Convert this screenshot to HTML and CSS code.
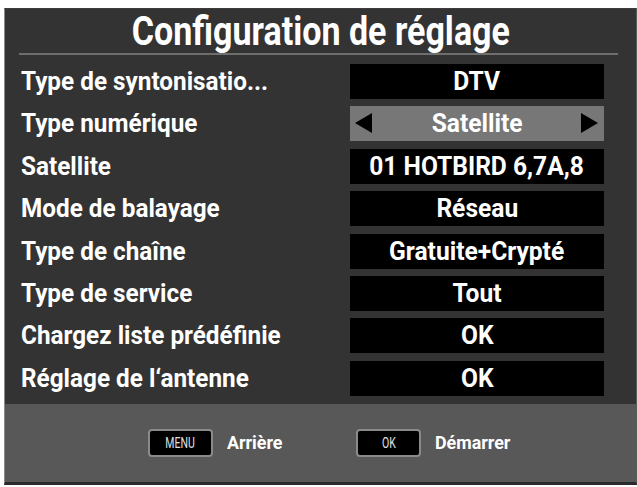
FILE: index.html
```
<!DOCTYPE html>
<html>
<head>
<meta charset="utf-8">
<link rel="stylesheet" href="styles.css">
</head>
<body>
<div class="panel">
  <div class="header">
    <h1 class="title"><span class="cond">Configuration de réglage</span></h1>
    <div class="sep"></div>
  </div>
  <div class="rows">
    <div class="label"><span class="cond">Type de syntonisatio...</span></div>
    <div class="value"><span class="cond">DTV</span></div>
    <div class="label"><span class="cond">Type numérique</span></div>
    <div class="value sel"><span class="arrow left"></span><span class="cond">Satellite</span><span class="arrow right"></span></div>
    <div class="label"><span class="cond">Satellite</span></div>
    <div class="value"><span class="cond">01 HOTBIRD 6,7A,8</span></div>
    <div class="label"><span class="cond">Mode de balayage</span></div>
    <div class="value"><span class="cond">Réseau</span></div>
    <div class="label"><span class="cond">Type de chaîne</span></div>
    <div class="value"><span class="cond">Gratuite+Crypté</span></div>
    <div class="label"><span class="cond">Type de service</span></div>
    <div class="value"><span class="cond">Tout</span></div>
    <div class="label"><span class="cond">Chargez liste prédéfinie</span></div>
    <div class="value"><span class="cond">OK</span></div>
    <div class="label"><span class="cond">Réglage de l‘antenne</span></div>
    <div class="value"><span class="cond">OK</span></div>
  </div>
  <div class="footer">
    <div class="hint"><span class="key"><span class="keytext">MENU</span></span><span class="hint-text">Arrière</span></div>
    <div class="hint"><span class="key"><span class="keytext">OK</span></span><span class="hint-text">Démarrer</span></div>
  </div>
</div>
</body>
</html>
```
FILE: styles.css
```
html, body {
  margin: 0;
  padding: 0;
  background: #ffffff;
}
body {
  font-family: "Roboto", "Liberation Sans", sans-serif;
  font-weight: bold;
  color: #ffffff;
  overflow: hidden;
}
.cond {
  display: inline-block;
  white-space: nowrap;
}
.panel {
  margin: 8px 0 0 4px;
  height: 473px;
  background: #333333;
  border-left: 1px solid #8c8c8c;
  border-right: 1px solid #5a5a5a;
  border-top: 1px solid #3c3c3c;
  border-bottom: 3px solid #2a2a2a;
  display: flex;
  flex-direction: column;
}
.header {
  display: flex;
  flex-direction: column;
}
.title {
  margin: 0;
  font-size: 41px;
  line-height: 44px;
  text-align: center;
  font-weight: bold;
}
.title .cond {
  transform: scaleX(0.83);
  transform-origin: center;
}
.sep {
  height: 2px;
  background: #6e6e6e;
  margin: 0 18px 0 14px;
}
.rows {
  margin-top: 9px;
  display: grid;
  grid-template-columns: 331px 254px;
  grid-auto-rows: 35px;
  row-gap: 7.4px;
  padding-left: 14px;
}
.label {
  font-size: 26px;
  line-height: 35px;
  white-space: nowrap;
  padding-left: 2px;
}
.label .cond {
  transform: scaleX(0.935);
  transform-origin: left center;
}
.value {
  background: #000000;
  font-size: 26px;
  line-height: 35px;
  text-align: center;
  position: relative;
}
.value .cond {
  transform: scaleX(0.945);
  transform-origin: center;
}
.value.sel {
  background: #777777;
}
.arrow {
  position: absolute;
  top: 7px;
  width: 0;
  height: 0;
  border-top: 10px solid transparent;
  border-bottom: 10px solid transparent;
}
.arrow.left {
  left: 5px;
  border-right: 17px solid #000;
}
.arrow.right {
  right: 6px;
  border-left: 17px solid #000;
}
.footer {
  margin-top: 8px;
  flex: 1;
  background: #585858;
  display: flex;
  align-items: center;
  padding-left: 143px;
  gap: 70px;
}
.hint {
  display: flex;
  align-items: center;
}
.key {
  width: 61px;
  height: 24px;
  border: 2px solid #8a8a8a;
  border-radius: 4px;
  background: #000;
  color: #e0e0e0;
  font-weight: normal;
  font-size: 15px;
  line-height: 24px;
  text-align: center;
}
.keytext {
  display: inline-block;
  transform: scaleX(0.7);
}
.hint-text {
  margin-left: 14px;
  font-size: 19px;
  display: inline-block;
  transform: scaleX(0.94);
  transform-origin: left center;
}
```
